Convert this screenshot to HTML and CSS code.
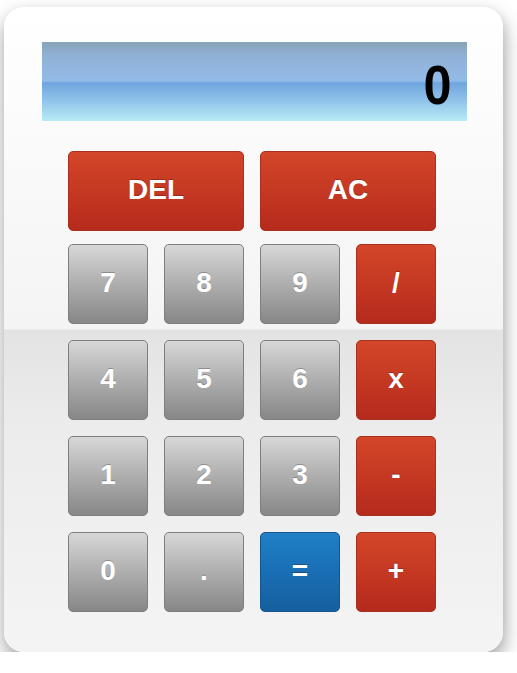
FILE: index.html
```html
<!DOCTYPE html>
<html>
<head>
<meta charset="utf-8">
<link rel="stylesheet" href="styles.css">
</head>
<body>
<div class="calc">
  <div class="display"><span class="digit">0</span></div>
  <div class="keys">
    <div class="top-row">
      <button class="key red wide">DEL</button>
      <button class="key red wide">AC</button>
    </div>
    <div class="grid">
      <button class="key gray">7</button>
      <button class="key gray">8</button>
      <button class="key gray">9</button>
      <button class="key red">/</button>
      <button class="key gray">4</button>
      <button class="key gray">5</button>
      <button class="key gray">6</button>
      <button class="key red">x</button>
      <button class="key gray">1</button>
      <button class="key gray">2</button>
      <button class="key gray">3</button>
      <button class="key red">-</button>
      <button class="key gray">0</button>
      <button class="key gray">.</button>
      <button class="key blue">=</button>
      <button class="key red">+</button>
    </div>
  </div>
</div>
</body>
</html>
```
FILE: styles.css
```css
html, body {
  margin: 0;
  padding: 0;
  background: #fff;
}
body {
  font-family: "Liberation Sans", Arial, sans-serif;
}
.calc {
  box-sizing: border-box;
  margin: 7px 0 0 4px;
  width: 499px;
  height: 645px;
  border-radius: 20px;
  padding: 35px 0 0 38px;
  background: linear-gradient(to bottom, #ffffff 0px, #f4f4f4 322px, #e3e3e3 323px, #ececec 420px, #f4f4f4 645px);
  box-shadow: 0 10px 22px rgba(0, 0, 0, 0.34), 3px 3px 10px rgba(0, 0, 0, 0.08);
}
.display {
  box-sizing: border-box;
  width: 425px;
  height: 79px;
  display: flex;
  align-items: center;
  justify-content: flex-end;
  padding: 6px 14px 0 0;
  background: linear-gradient(to bottom, #88a3b6 0px, #8fb0d4 12px, #93bbe8 39px, #7aaee4 40px, #6fa5df 41px, #8fc2ea 58px, #b8ecf4 79px);
}
.digit {
  font-family: "Liberation Sans", Arial, sans-serif;
  font-weight: bold;
  font-size: 56px;
  line-height: 1;
  color: #000;
  display: inline-block;
  transform: scale(0.9, 1);
}
.keys {
  margin: 30px 0 0 26px;
  width: 368px;
}
.top-row {
  display: flex;
  gap: 16px;
  margin-bottom: 13px;
}
.grid {
  display: grid;
  grid-template-columns: repeat(4, 80px);
  grid-auto-rows: 80px;
  gap: 16px;
}
.key {
  box-sizing: border-box;
  width: 80px;
  height: 80px;
  margin: 0;
  padding: 0 0 2px;
  border-radius: 5px;
  font-family: "Liberation Sans", Arial, sans-serif;
  font-weight: bold;
  font-size: 28px;
  color: #fff;
  text-shadow: 0 -1px 0 rgba(0, 0, 0, 0.25);
  cursor: pointer;
}
.key.wide {
  width: 176px;
}
.gray {
  border: 1px solid #7e7e7e;
  background: linear-gradient(to bottom, #d7d7d7 0%, #aeaeae 50%, #878787 100%);
}
.red {
  border: 1px solid #a8301f;
  background: linear-gradient(to bottom, #d3462a 0%, #c53822 50%, #b62a1d 100%);
}
.blue {
  border: 1px solid #14558e;
  background: linear-gradient(to bottom, #2080c6 0%, #1a6eb4 50%, #155f9e 100%);
}
```
